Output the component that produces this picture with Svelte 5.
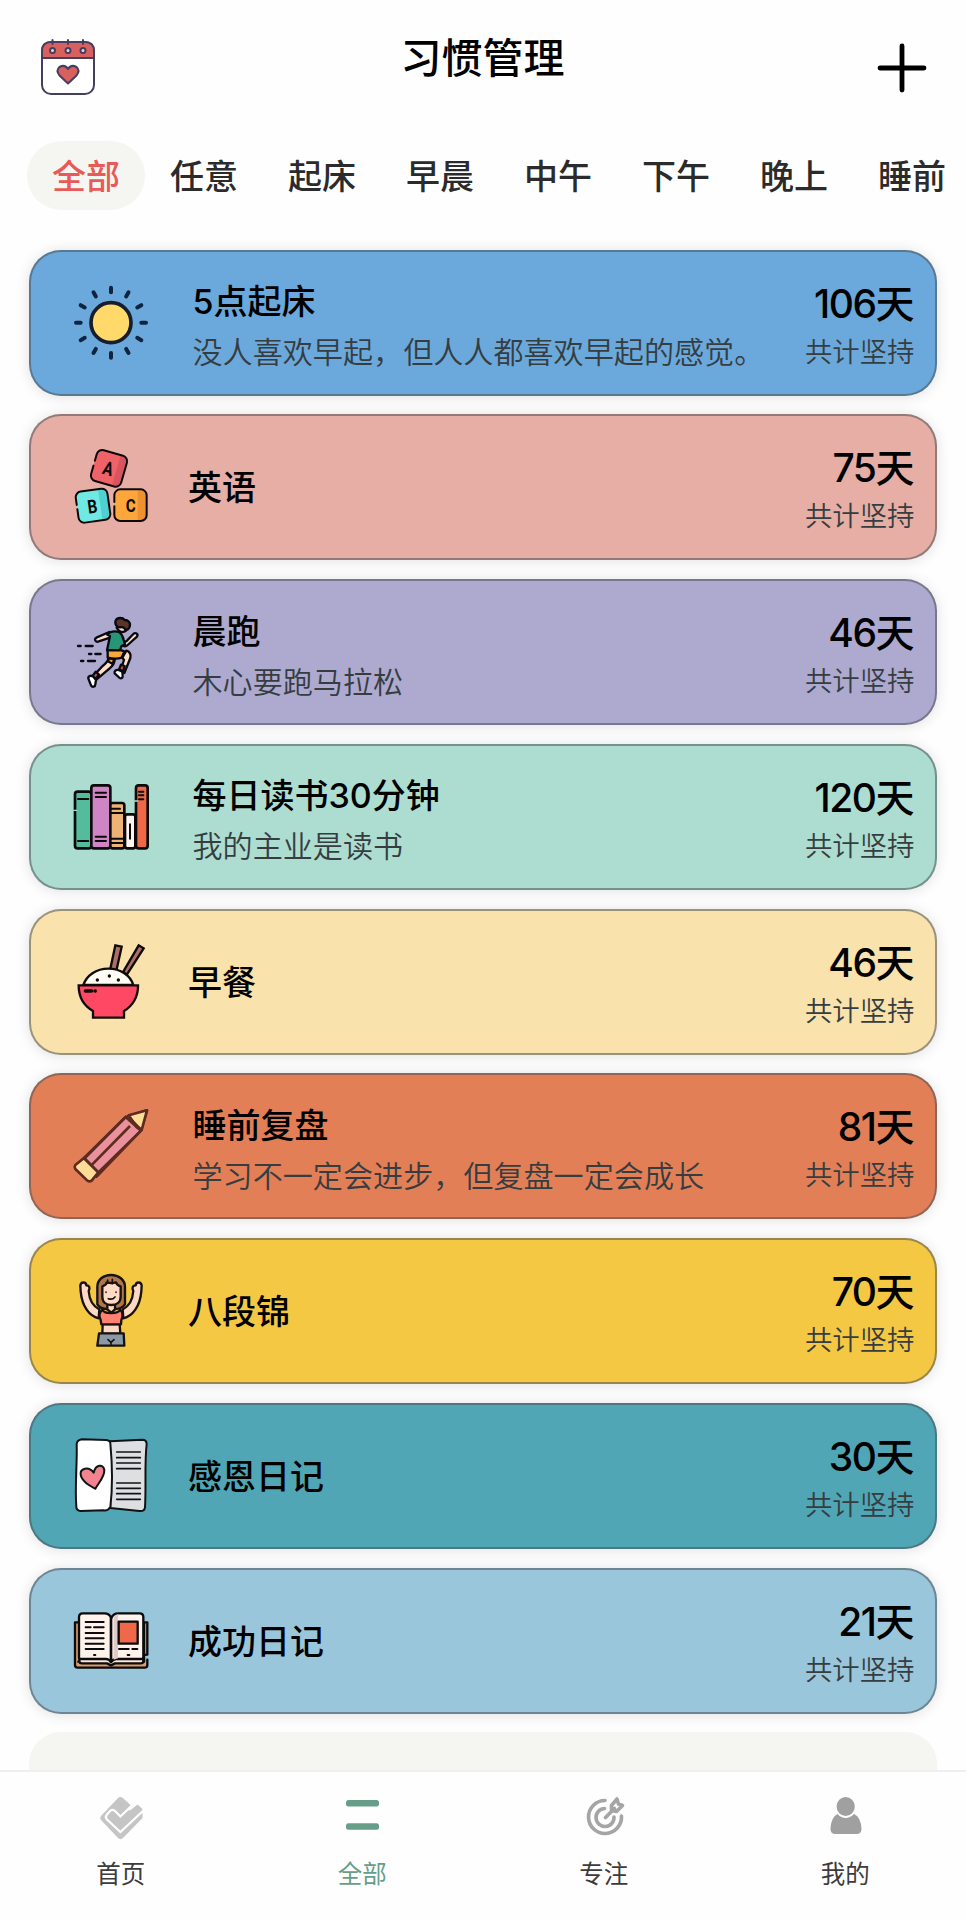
<script lang="ts">
  type Habit = {
    icon: string;
    title: string;
    note?: string;
    days: number;
    color: string;
  };

  const tabs = ['全部', '任意', '起床', '早晨', '中午', '下午', '晚上', '睡前'];
  let activeTab = $state('全部');

  const habits: Habit[] = [
    { icon: 'sun', title: '5点起床', note: '没人喜欢早起，但人人都喜欢早起的感觉。', days: 106, color: '#6ba9dc' },
    { icon: 'blocks', title: '英语', days: 75, color: '#e6aea4' },
    { icon: 'runner', title: '晨跑', note: '木心要跑马拉松', days: 46, color: '#aea9cf' },
    { icon: 'books', title: '每日读书30分钟', note: '我的主业是读书', days: 120, color: '#acddd0' },
    { icon: 'rice', title: '早餐', days: 46, color: '#f9e2ab' },
    { icon: 'pencil', title: '睡前复盘', note: '学习不一定会进步，但复盘一定会成长', days: 81, color: '#e37f57' },
    { icon: 'fitness', title: '八段锦', days: 70, color: '#f4c843' },
    { icon: 'diary', title: '感恩日记', days: 30, color: '#50a6b5' },
    { icon: 'openbook', title: '成功日记', days: 21, color: '#9ac6dc' }
  ];

  const navs = [
    { id: 'home', label: '首页' },
    { id: 'all', label: '全部' },
    { id: 'focus', label: '专注' },
    { id: 'mine', label: '我的' }
  ];
  let activeNav = $state('all');

  const rays = Array.from({ length: 12 }, (_, i) => i * 30);
</script>

{#snippet habitIcon(name: string)}
  {#if name === 'sun'}
    <svg class="icon" viewBox="0 9 300 300">
      <circle cx="153" cy="158" r="60" fill="#ffda6b" stroke="#161d2c" stroke-width="11" />
      {#each rays as r}
        <path d="M153 53v14" transform="rotate({r} 153 158)" stroke="#10233f" stroke-width="12" stroke-linecap="round" />
      {/each}
    </svg>
  {:else if name === 'blocks'}
    <svg class="icon" viewBox="0 8 300 300" fill="none" stroke="#0c0808" stroke-width="6" stroke-linecap="round">
      <g transform="rotate(16 147 102)">
        <rect x="100" y="54" width="94" height="96" rx="17" fill="#ee6268" stroke="none" />
        <path d="M170 54h7a17 17 0 0 1 17 17v62a17 17 0 0 1-17 17h-7z" fill="#d8545f" stroke="none" />
        <path d="M100 92V71a17 17 0 0 1 17-17h60a17 17 0 0 1 17 17v62a17 17 0 0 1-17 17h-60a17 17 0 0 1-17-17v-26" />
        <text class="letter" x="145" y="123">A</text>
      </g>
      <g transform="rotate(-8 99 214)">
        <rect x="51" y="167" width="96" height="94" rx="17" fill="#70e9e5" stroke="none" />
        <path d="M121 167h9a17 17 0 0 1 17 17v60a17 17 0 0 1-17 17h-9z" fill="#4fd1cf" stroke="none" />
        <path d="M51 205v-21a17 17 0 0 1 17-17h62a17 17 0 0 1 17 17v60a17 17 0 0 1-17 17H68a17 17 0 0 1-17-17v-26" />
        <text class="letter" x="97" y="236">B</text>
      </g>
      <rect x="163" y="165" width="97" height="95" rx="18" fill="#fda63c" stroke="none" />
      <path d="M233 165h9a18 18 0 0 1 18 18v59a18 18 0 0 1-18 18h-9z" fill="#ef9130" stroke="none" />
      <path d="M163 203v-20a18 18 0 0 1 18-18h61a18 18 0 0 1 18 18v59a18 18 0 0 1-18 18h-61a18 18 0 0 1-18-18v-26" />
      <text class="letter" x="212" y="233">C</text>
    </svg>
  {:else if name === 'runner'}
    <svg class="icon" viewBox="0 7 300 300" fill="none" stroke="#080a12" stroke-width="7" stroke-linecap="round" stroke-linejoin="round">
      <path d="M54 139h8M77 139h21M87 163h7M106 163h16M63 184h7M84 184h21" />
      <path d="M148 97l-39 17c-7 4-3 14 5 12l36-12z" fill="#ffe0c5" />
      <path d="M190 130l-4 6c5 6 12 5 17 0l28-25c5-8-5-14-11-8l-19 20z" fill="#ffe0c5" />
      <path d="M170 84c5 10 16 17 27 10l3-10-20-8z" fill="#ffe0c5" />
      <path d="M173 82c-12-11-8-27 8-27 8 0 10 2 13 6 8 0 15 5 16 12 0 9-4 17-13 19-3-8-9-11-17-9z" fill="#5d3325" />
      <path d="M142 105c8-10 20-12 36-8 8 8 12 16 13 24l4 13-11 6-4 12h-39l9-43z" fill="#279678" />
      <path d="M146 175c-2 13-13 19-21 27l-26 28 10 10 40-34c10-8 15-17 15-27z" fill="#ffe0c5" />
      <path d="M148 175l-4 10 13 7 6-12z" fill="#f7a93c" />
      <path d="M187 174l5 7-11 33 12 6 18-45c3-10-2-20-12-22z" fill="#ffe0c5" />
      <path d="M143 152h42l8 3-8 19c-15 5-28 3-42 0z" fill="#f7a93c" />
      <path d="M107 216l-10 14 9 9 11-14zM183 195l-6 15 13 4 4-15z" fill="#c84a42" />
      <path d="M99 230c-8-4-17 0-13 9l7 18c4 7 13 5 13-3l2-13z" fill="#fff" />
      <path d="M176 211c-8-2-14 4-12 10l15 14c6 3 10-2 9-7l-1-12z" fill="#fff" />
    </svg>
  {:else if name === 'books'}
    <svg class="icon" viewBox="0 6 300 300" stroke="#0a0a0a" stroke-width="8" stroke-linecap="round" stroke-linejoin="round">
      <rect x="45" y="80" width="49" height="170" rx="8" fill="#55bb9d" />
      <rect x="94" y="61" width="57" height="189" rx="8" fill="#cf85c5" />
      <rect x="151" y="114" width="42" height="136" rx="7" fill="#edb275" />
      <rect x="195" y="148" width="31" height="102" rx="7" fill="#fff4ef" />
      <rect x="228" y="61" width="35" height="189" rx="8" fill="#ef6949" />
      <path d="M54 102h31M54 228h31M107 83h31M107 96h31M107 215h31M107 228h31M153 131h27M151 144h42M151 221h42M151 234h42M210 178v43M237 80h13M237 91h13M237 103h13" fill="none" stroke-width="6" />
      <path d="M41 136h9M224 108h9" stroke="#acddd0" stroke-width="4" />
    </svg>
  {:else if name === 'rice'}
    <svg class="icon" viewBox="0 6 300 300" stroke="#100b08" stroke-width="7" stroke-linejoin="miter">
      <path d="M151 116l15-70 19 4-16 72zM190 125l46-79 15 9-51 80z" fill="#a96f68" />
      <path d="M70 165c10-28 38-49 75-49s66 21 75 49z" fill="#fffdf4" />
      <path d="M56 166h178c1 34-16 62-42 77v20H99v-20c-27-15-43-43-43-77z" fill="#ff4964" />
      <path d="M76 183h19M105 183h1" stroke-width="10" stroke-linecap="round" />
      <path d="M112 150h.1M148 138h.1M175 150h.1" stroke-width="10" stroke-linecap="round" />
    </svg>
  {:else if name === 'pencil'}
    <svg class="icon" viewBox="0 500 300 300" stroke="#5e2b21" stroke-width="8" stroke-linejoin="round">
      <path d="M197 563l64-20-18 61-133 138-39-52z" fill="#ea929c" />
      <path d="M206 558l55-15-16 59-15-9z" fill="#fddc96" />
      <path d="M72 686l43 43-20 25q-6 4-13 0l-36-35q-4-6 0-12z" fill="#fddc96" />
      <path d="M197 563L72 686l43 43 128-125zM206 564l38 38M210 590L94 708" fill="none" />
    </svg>
  {:else if name === 'fitness'}
    <svg class="icon" viewBox="0 5 300 300" stroke="#161312" stroke-width="7" stroke-linejoin="round" stroke-linecap="round">
      <path d="M116 177c-28-6-50-36-54-81l-1-17c1-12 17-13 18-1 9 0 12 8 7 17 2 26 13 46 32 55zM190 177c28-6 50-36 54-81l1-17c-1-12-17-13-18-1-9 0-12 8-7 17-2 26-13 46-32 55z" fill="#ffd9c3" />
      <path d="M112 135V83c0-22 18-36 41-36s42 14 42 36v52c-7 10-18 14-31 14h-22c-13 0-24-4-30-14z" fill="#b2754b" />
      <path d="M142 133h23v17l-11 10-12-10z" fill="#ffd9c3" />
      <path d="M127 81q12-4 13-12 15 4 28 0 2 9 14 12v31c0 16-12 25-28 25s-27-9-27-25z" fill="#ffd9c3" />
      <path d="M128 194h51l2 30h-54z" fill="#ffd9c3" />
      <path d="M127 151c4 10 14 10 27 10s22-1 26-10c10 9 9 21 4 31l-1 13h-59l-2-13c-5-10-5-22 5-31z" fill="#ff8172" />
      <path d="M117 222h74l2 37h-81z" fill="#8b99a4" />
      <path d="M145 118q12 5 20-5M138 98v1M168 98v1M144 241l9 8 9-8M153 249v7M143 62v10M157 60v13" fill="none" stroke-width="5" />
    </svg>
  {:else if name === 'diary'}
    <svg class="icon" viewBox="0 19 300 300" stroke="#101316" stroke-width="6" stroke-linejoin="round" stroke-linecap="round">
      <path d="M150 65l96-5q14 0 14 13c-7 60-1 122-5 190q-2 13-17 11l-87-9z" fill="#dedfe0" />
      <path d="M66 59l72 2q13 1 13 10c6 64 8 125 0 191q-8 13-21 10l-68 2q-13-1-13-13c-5-61 3-127 1-188q1-12 16-14z" fill="#fff" />
      <path d="M106 207c-18-10-41-22-44-42-3-19 24-27 39-6 6-25 29-27 32-8 1 20-15 36-27 56z" fill="#f2848f" />
      <path d="M170 97h71M170 114h71M170 130h71M170 147h71M170 190h71M170 206h71M170 222h71M170 239h71" fill="none" stroke-width="5" />
    </svg>
  {:else}
    <svg class="icon" viewBox="0 513 300 300" stroke="#0b0b0d" stroke-width="7" stroke-linejoin="round" stroke-linecap="round">
      <path d="M55 607H45v128q0 8 8 8h201q8 0 8-8v-16M262 704v-97h-10v118H55z" fill="#dd9c6c" />
      <path d="M58 713v9q0 8 8 8h75l12 6 12-6h77q8 0 8-8v-9z" fill="#ffe5d7" />
      <path d="M154 594q-6-14-21-14H68q-11 0-11 11v121q0 5 6 5h75q9 0 15 9 7-9 16-9h75q6 0 6-5V591q0-11-11-11h-64q-15 0-21 14z" fill="#fff3ec" />
      <path d="M161 592q7-9 13-9v132l-13 4z" fill="#dfcac5" stroke="none" />
      <path d="M153 594v132" fill="none" stroke-width="8" />
      <rect x="176" y="605" width="57" height="66" fill="#ee6849" />
      <path d="M77 606h54M77 622h15M102 622h29M77 639h54M77 655h54M77 671h54M77 687h54M177 687h29M217 687h15M102 705h4M203 705h5" fill="none" stroke-width="6" />
    </svg>
  {/if}
{/snippet}

{#snippet navIcon(name: string)}
  {#if name === 'home'}
    <svg class="nav-icon" viewBox="0 0 60 50">
      <path
        d="M27 6q2.400-2 4.800 0L40 13.500l-4 4 3 1 7.500-6 5 4.500v9L32 46q-2.600 2.300-5 0L10 28q-1.800-2 0-4z"
        fill="#c5c5c5"
      />
      <path d="M44 10.500L29.400 24.500l-5.600-5.700q-2.300-2-4.500 0L16 22.500q-2.400 2.400 0 5l13.400 12.500L53 18" fill="none" stroke="#fefefe" stroke-width="2.200" />
    </svg>
  {:else if name === 'all'}
    <svg class="nav-icon" viewBox="0 0 60 50" fill="#679e8a">
      <rect x="14" y="8" width="33" height="6.500" rx="2.500" />
      <rect x="14" y="31.300" width="33" height="6.500" rx="2.500" />
    </svg>
  {:else if name === 'focus'}
    <svg class="nav-icon" viewBox="0 0 60 50" fill="none" stroke="#a5a5a5" stroke-width="3.600" stroke-linecap="round" stroke-linejoin="round">
      <path d="M31 8.500A16.500 16.500 0 1 0 47.500 24" />
      <path d="M30.500 16.500A9 9 0 1 0 40 25" />
      <path d="M31.500 25.500l9-9M37.500 18.500v-5l5.500-6.500 1.500 5 4 1.500-6 6z" />
    </svg>
  {:else}
    <svg class="nav-icon" viewBox="0 0 60 50" fill="#a0a0a0">
      <path d="M22.500 22h16.500q7 3 7.500 15 0 5-5 5H20.500q-5 0-5-5 .5-12 7-15z" />
      <ellipse cx="30.700" cy="14.500" rx="10" ry="10.500" stroke="#fefefe" stroke-width="1.800" />
    </svg>
  {/if}
{/snippet}

<div class="page">
  <header class="header">
    <button class="icon-btn" aria-label="日历">
      <svg width="60" height="66" viewBox="0 0 60 66" stroke="#453e5e" stroke-width="2" stroke-linecap="round">
        <rect x="5" y="7" width="52" height="52" rx="9" fill="#fff" />
        <path d="M5 23v-7q0-9 9-9h34q9 0 9 9v7z" fill="#d8605f" />
        <path d="M15.500 5v4M31 5v4M46 5v4" />
        <circle cx="15.500" cy="15.500" r="2.500" fill="#e9d5da" />
        <circle cx="31" cy="15.500" r="2.500" fill="#e9d5da" />
        <circle cx="46" cy="15.500" r="2.500" fill="#e9d5da" />
        <path d="M31 48.500l-8.500-8q-4-5 0-8.500 5.500-3 8.500 2 3-5 8.500-2 4 3.500 0 8.500z" fill="#d8605f" stroke-linejoin="round" />
      </svg>
    </button>
    <h1 class="title">习惯管理</h1>
    <button class="icon-btn" aria-label="添加">
      <svg width="52" height="52" viewBox="0 0 52 52" stroke="#000" stroke-width="4.800" stroke-linecap="round">
        <path d="M26 4v44M4 26h44" />
      </svg>
    </button>
  </header>

  <div class="tabs">
    {#each tabs as tab}
      <button class="tab" class:active={activeTab === tab} onclick={() => (activeTab = tab)}>{tab}</button>
    {/each}
  </div>

  <main class="list">
    {#each habits as habit}
      <article class="card" style="background-color: {habit.color}">
        {@render habitIcon(habit.icon)}
        <div class="info" class:single={!habit.note}>
          <h2 class="name">{habit.title}</h2>
          {#if habit.note}
            <p class="note">{habit.note}</p>
          {/if}
        </div>
        <div class="count">
          <strong class="days"><span class="num">{habit.days}</span>天</strong>
          <span class="label">共计坚持</span>
        </div>
      </article>
    {/each}
    <div class="card-empty"></div>
  </main>

  <nav class="nav">
    {#each navs as nav}
      <button class="nav-item" class:active={activeNav === nav.id} onclick={() => (activeNav = nav.id)}>
        {@render navIcon(nav.id)}
        <span>{nav.label}</span>
      </button>
    {/each}
  </nav>
</div>

<style>
  :global(body) {
    background: #fefefe;
  }

  .page {
    display: flex;
    flex-direction: column;
    box-sizing: border-box;
    width: 966px;
    height: 1920px;
    overflow: hidden;
    font-family: Inter, 'Noto Sans CJK SC', sans-serif;
    color: #000;
    background: #fefefe;
  }

  button {
    margin: 0;
    padding: 0;
    border: 0;
    background: none;
    font: inherit;
    color: inherit;
  }

  h1,
  h2,
  p {
    margin: 0;
    font-weight: 500;
  }

  svg {
    display: block;
  }

  /* 顶部标题栏 */
  .header {
    flex: none;
    display: grid;
    grid-template-columns: 60px 1fr 60px;
    align-items: start;
    box-sizing: border-box;
    height: 141px;
    padding: 35px 38px 0 37px;
  }

  .header .icon-btn:last-child {
    justify-self: end;
    padding-top: 7px;
  }

  .title {
    font-size: 41px;
    line-height: 46px;
    text-align: center;
  }

  /* 时段筛选 */
  .tabs {
    flex: none;
    display: flex;
    height: 69px;
    padding-left: 27px;
  }

  .tab {
    flex: none;
    padding: 0 25px 2px;
    border-radius: 35px;
    font-size: 34px;
    font-weight: 500;
    color: #2b2b2b;
  }

  .tab.active {
    background: #f5f6f1;
    color: #e85a57;
  }

  /* 习惯列表 */
  .list {
    flex: 1;
    min-height: 0;
    display: flex;
    flex-direction: column;
    gap: 18.750px;
    padding: 39.500px 29px 0 28.500px;
    overflow: hidden;
  }

  .card {
    flex: none;
    display: flex;
    align-items: center;
    box-sizing: border-box;
    height: 146px;
    padding: 0 20.500px 0 29.500px;
    border: 2px solid rgba(75, 80, 85, 0.55);
    border-radius: 32px;
    box-shadow: 0 1px 14px rgba(0, 0, 0, 0.12);
  }

  .card-empty {
    flex: none;
    height: 147px;
    border-radius: 32px;
    background: #f5f6f1;
  }

  .icon {
    flex: none;
    width: 100px;
    height: 100px;
  }

  .letter {
    font-family: Roboto, sans-serif;
    font-size: 57px;
    font-weight: 700;
    text-anchor: middle;
    fill: #0c0808;
    stroke: none;
    transform-box: fill-box;
    transform-origin: center;
    transform: scaleX(0.8);
  }

  .info {
    flex: 1;
    padding: 9px 0 0 32.500px;
  }

  .info.single {
    padding: 2px 0 0 28px;
  }

  .name {
    font-size: 34px;
    line-height: 50px;
  }

  .note {
    font-size: 30.100px;
    font-weight: 350;
    line-height: 50px;
    color: #353d41;
    white-space: nowrap;
  }

  .count {
    display: flex;
    flex-direction: column;
    align-items: flex-end;
    padding-top: 9px;
  }

  .days {
    font-size: 39px;
    font-weight: 500;
    line-height: 49px;
  }

  .num {
    letter-spacing: -1.500px;
  }

  .label {
    font-size: 27.400px;
    font-weight: 350;
    line-height: 48px;
    color: #353d41;
  }

  /* 底部导航 */
  .nav {
    flex: none;
    display: grid;
    grid-template-columns: repeat(4, 1fr);
    box-sizing: border-box;
    height: 150px;
    padding-top: 20px;
    border-top: 2px solid #efefef;
    background: #fefefe;
  }

  .nav-item {
    display: flex;
    flex-direction: column;
    align-items: center;
    gap: 14px;
    font-size: 24.500px;
    line-height: 36px;
    color: #3c3c3c;
  }

  .nav-item.active {
    color: #679e8a;
  }

  .nav-icon {
    width: 60px;
    height: 50px;
  }
</style>
